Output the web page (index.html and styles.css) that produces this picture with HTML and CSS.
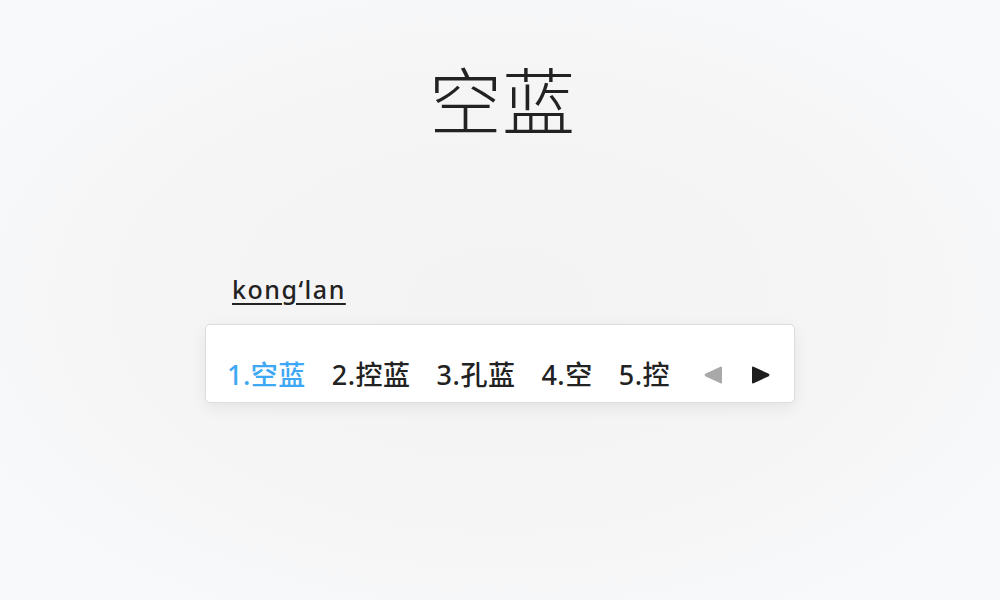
FILE: index.html
```html
<!DOCTYPE html>
<html lang="zh-CN">
<head>
<meta charset="utf-8">
<title>空蓝</title>
<link rel="stylesheet" href="styles.css">
</head>
<body>
<main class="page">
  <h1 class="title">空蓝</h1>
  <section class="ime">
    <div class="pinyin">kong‘lan</div>
    <div class="panel">
      <ul class="cands">
        <li class="cand active">1.空蓝</li>
        <li class="cand">2.控蓝</li>
        <li class="cand">3.孔蓝</li>
        <li class="cand">4.空</li>
        <li class="cand">5.控</li>
      </ul>
      <div class="pager">
        <svg class="arrow prev" width="18" height="18" viewBox="0 0 18 18"><path d="M18 1.8 L18 16.2 Q18 18 16.4 17.2 L1.2 10.2 Q0 9 1.2 7.8 L16.4 0.8 Q18 0 18 1.8 Z" fill="#a9a9a9"/></svg>
        <svg class="arrow next" width="18" height="18" viewBox="0 0 18 18"><path d="M0 1.8 L0 16.2 Q0 18 1.6 17.2 L16.8 10.2 Q18 9 16.8 7.8 L1.6 0.8 Q0 0 0 1.8 Z" fill="#1e1e1e"/></svg>
      </div>
    </div>
  </section>
</main>
</body>
</html>
```

FILE: styles.css
```css
html, body {
  margin: 0;
  padding: 0;
}
body {
  width: 1000px;
  height: 600px;
  overflow: hidden;
  background: radial-gradient(ellipse 60% 60% at 50% 50%, #f4f3f4 0%, #f5f5f6 60%, #f8f9fa 100%);
  font-family: "Noto Sans", "Noto Sans CJK SC", sans-serif;
  color: #222;
}
.page {
  display: flex;
  flex-direction: column;
  align-items: center;
}
.title {
  margin: 57px 0 0 4px;
  font-family: "Noto Sans CJK SC", sans-serif;
  font-weight: 300;
  font-size: 73px;
  line-height: 80px;
  color: #222;
}
.ime {
  width: 590px;
  margin-top: 137px;
  display: flex;
  flex-direction: column;
}
.pinyin {
  margin-left: 27px;
  font-family: "Noto Sans", "Noto Sans CJK SC", sans-serif;
  font-weight: 500;
  font-size: 25px;
  letter-spacing: 1.5px;
  line-height: 30px;
  color: #222;
  text-decoration: underline;
  text-decoration-thickness: 2px;
  text-underline-offset: 4px;
}
.panel {
  margin-top: 20px;
  box-sizing: border-box;
  height: 79px;
  background: #fff;
  border: 1px solid #dcdcdc;
  border-radius: 5px;
  box-shadow: 0 5px 16px rgba(0, 0, 0, 0.07);
  display: flex;
  align-items: flex-end;
  padding: 0 24px 12px 21px;
}
.cands {
  list-style: none;
  margin: 0;
  padding: 0;
  display: flex;
  gap: 26px;
}
.cand {
  font-family: "Noto Sans", "Noto Sans CJK SC", sans-serif;
  font-weight: 500;
  font-size: 27px;
  letter-spacing: 0.5px;
  line-height: 30px;
  color: #222;
}
.cand.active {
  color: #3ea8f4;
}
.pager {
  margin-left: auto;
  display: flex;
  gap: 30px;
  height: 30px;
  align-items: center;
}
.arrow {
  display: block;
}
```
